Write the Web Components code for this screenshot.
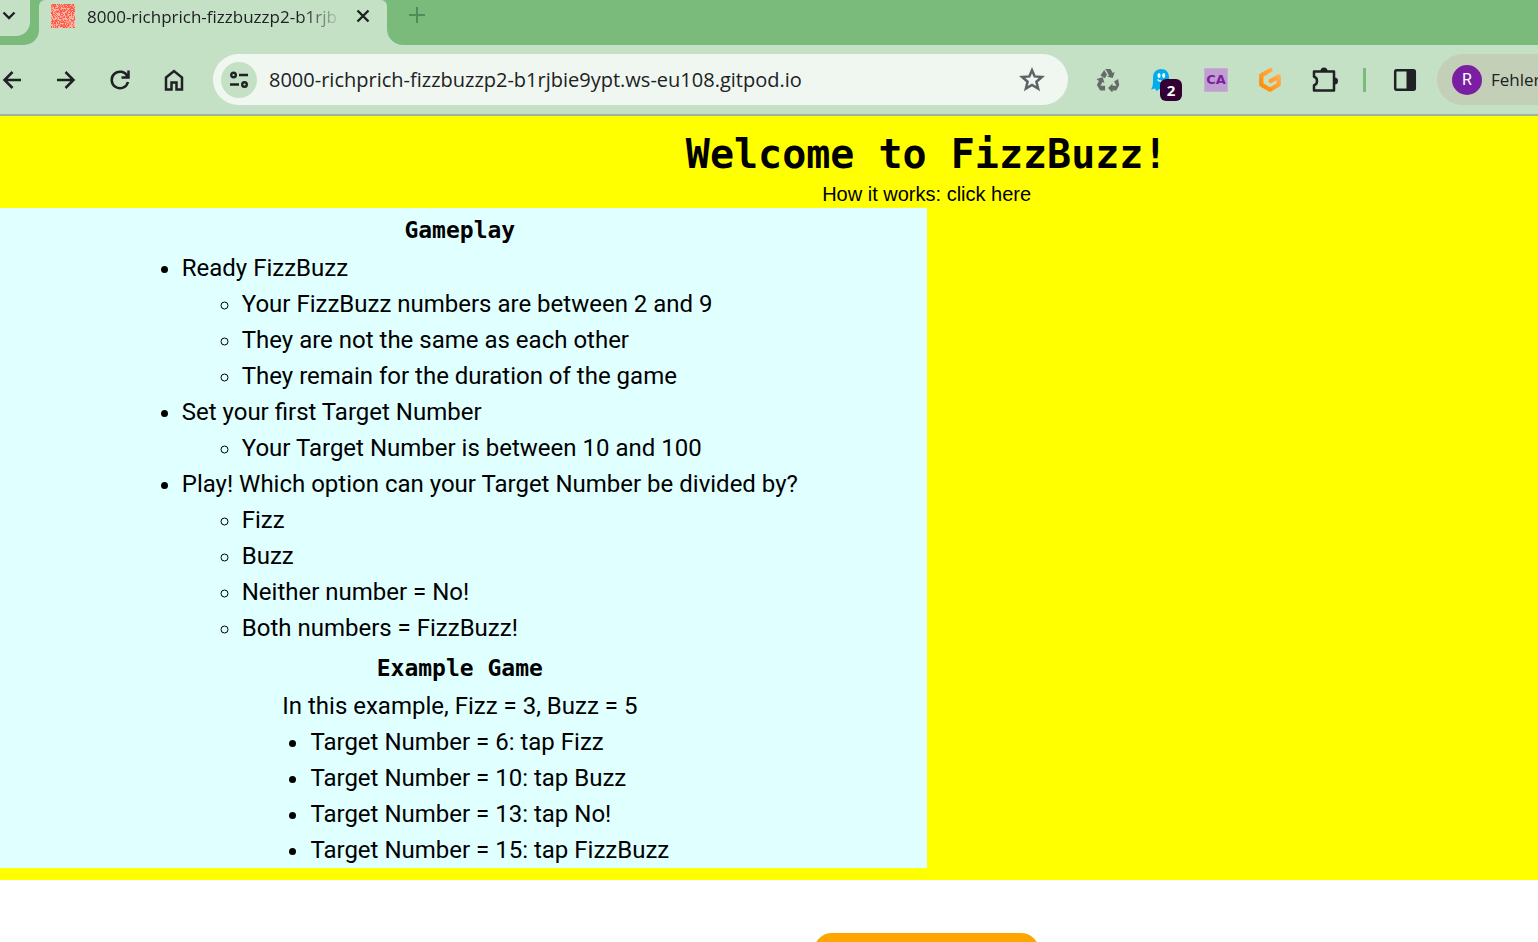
<!DOCTYPE html>
<html lang="en">
<head>
<meta charset="utf-8">
<title>FizzBuzz</title>
<style>
html,body{margin:0;height:100%;overflow:hidden;background:#fff}
body{font-family:"Open Sans","Noto Sans",sans-serif;color:#202124}
</style>
</head>
<body>
<browser-window></browser-window>

<script>
const BTN = `button{border:0;padding:0;background:none;font:inherit;color:inherit;display:grid;place-items:center}svg{display:block}`;

function define(name, css, html, setup) {
  const tpl = document.createElement('template');
  tpl.innerHTML = `<style>*{box-sizing:border-box}${css}</style>${html}`;
  customElements.define(name, class extends HTMLElement {
    constructor() {
      super();
      this.attachShadow({ mode: 'open' }).append(tpl.content.cloneNode(true));
      if (setup) setup(this.shadowRoot);
    }
  });
}

/* Speckled site icon of the tab, built from a seeded grid */
define('site-icon', `:host{display:block;width:24px;height:24px}svg{display:block}`,
`<svg width="24" height="24" viewBox="0 0 24 24" aria-hidden="true"><path fill="#ff5a48" d="M0 0h24v24H0z"/><path id="p" fill="#f9b5a5"/><path id="q" fill="#ff8573"/></svg>`,
root => {
  let seed = 11, d = '', e = '';
  for (let y = 0; y < 24; y++) for (let x = 0; x < 24; x++) {
    seed = (seed * 48271) % 2147483647;
    const v = seed / 2147483647;
    if (v < 0.36) d += `M${x} ${y}h1v1h-1z`;
    else if (v < 0.6) e += `M${x} ${y}h1v1h-1z`;
  }
  root.getElementById('p').setAttribute('d', d);
  root.getElementById('q').setAttribute('d', e);
});

define('tab-strip', `
${BTN}
:host{display:flex;height:45px;background:#c5e1c5;overflow:hidden}
.lead{width:39px;background:#7aba7b;border-bottom-right-radius:15px;flex:none}
.search{width:30px;height:36px;background:#c5e1c5;border-bottom-right-radius:14px;padding-right:12px;padding-bottom:6px}
.tabwrap{width:348px;flex:none;background:linear-gradient(#7aba7b 8px,#c5e1c5 8px)}
.tab{height:45px;background:#c5e1c5;border-radius:6px 6px 0 0;display:flex;align-items:center;padding:0 12px 14px;gap:12px}
.title{flex:1;white-space:nowrap;font-size:17px;line-height:28px;margin-top:2px;
-webkit-mask-image:linear-gradient(90deg,#000 215px,transparent 256px);mask-image:linear-gradient(90deg,#000 215px,transparent 256px)}
.close{width:24px;height:24px}
.rest{flex:1;background:#7aba7b;border-bottom-left-radius:16px;padding:3px 18px}
`, `
<div class="lead"><button class="search" aria-label="Search tabs"><svg width="16" height="16" viewBox="0 0 16 16" fill="none" stroke="#202124" stroke-width="2.4"><path d="M2.500 5.500 8 11l5.500-5.500"/></svg></button></div>
<div class="tabwrap"><div class="tab"><site-icon></site-icon><div class="title">8000-richprich-fizzbuzzp2-b1rjb</div>
<button class="close" aria-label="Close tab"><svg width="14" height="14" viewBox="0 0 14 14" stroke="#202124" stroke-width="2.400"><path d="M1.500 1.500l11 11M12.500 1.500l-11 11"/></svg></button></div></div>
<div class="rest"><button aria-label="New tab"><svg width="24" height="24" viewBox="0 0 24 24" stroke="#54895a" stroke-width="2"><path d="M4 12h16M12 4v16"/></svg></button></div>`);

define('address-bar', `
${BTN}
:host{display:flex;align-items:center;background:#f0f7f1;border-radius:26px;height:51px;padding:0 20px 0 8px;gap:12px}
.site{width:36px;height:36px;border-radius:50%;background:#c5e1c5;flex:none}
input{flex:1;min-width:0;border:0;background:none;padding:0;font:20px/28px "Open Sans","Noto Sans",sans-serif;color:#202124;outline:0}
`, `
<button class="site" aria-label="Site information"><svg width="20" height="20" viewBox="0 0 20 20" fill="none" stroke="#202124" stroke-width="2.400"><circle cx="4.500" cy="5" r="2.300"/><path d="M10 5h9M1 14.500h9"/><circle cx="15.500" cy="14.500" r="2.300"/></svg></button>
<input type="text" aria-label="Address" value="8000-richprich-fizzbuzzp2-b1rjbie9ypt.ws-eu108.gitpod.io">
<button aria-label="Bookmark"><svg width="32" height="32" viewBox="0 0 24 24"><path fill="none" stroke="#5f6368" stroke-width="1.900" d="M12 4.600l2 4.700 5.400.5-4.100 3.500 1.300 5.200-4.600-2.800-4.600 2.800 1.300-5.200-4.100-3.500 5.400-.5z"/></svg></button>`);

define('tool-bar', `
${BTN}
:host{display:flex;align-items:center;height:71px;background:#c5e1c5;border-bottom:2px solid #9fb4a1;overflow:hidden}
nav{display:flex;gap:30px;flex:none;margin-right:27px}
nav button,.ext button{width:24px;height:32px}
address-bar{flex:1;min-width:0}
.ext{display:flex;align-items:center;gap:30px;flex:none;margin:0 20px 0 28px}
.ghost{position:relative}
.badge{position:absolute;left:10px;top:15px;width:22px;height:22px;border-radius:6px;background:#330033;color:#fff;font:bold 15px/22px "Open Sans",sans-serif;text-align:center}
.ext .ca{width:24px;height:24px;background:#c09fcf;border:1px solid #c8addb;color:#7b1fa2;font:bold 13px/22px "DejaVu Sans",sans-serif}
.sep{width:3px;height:24px;background:#7aba7b;margin:0 -3px}
.profile{display:flex;align-items:center;gap:9px;height:51px;width:101px;flex:none;padding-left:15px;background:#c4cfb7;border-radius:26px 0 0 26px;font-size:17px;white-space:nowrap;overflow:hidden}
.avatar{width:30px;height:30px;border-radius:50%;background:#7b1fa2;color:#fff;font:16px/30px Roboto,sans-serif;flex:none}
`, `
<nav aria-label="Navigation">
<button aria-label="Back"><svg width="24" height="24" viewBox="0 0 24 24" fill="none" stroke="#202124" stroke-width="2.500"><path d="M21 12H4.500M12.500 4l-8 8 8 8"/></svg></button>
<button aria-label="Forward"><svg width="24" height="24" viewBox="0 0 24 24" fill="none" stroke="#202124" stroke-width="2.500"><path d="M3 12h16.500M11.500 4l8 8-8 8"/></svg></button>
<button aria-label="Reload"><svg width="24" height="24" viewBox="0 0 24 24" fill="none" stroke="#202124" stroke-width="2.500"><path d="M19.500 8.500A8.300 8.300 0 1 0 20 14M20.500 2.500v7h-7"/></svg></button>
<button aria-label="Home"><svg width="24" height="24" viewBox="0 0 24 24" fill="none" stroke="#202124" stroke-width="2.500"><path d="M4 9.500 12 3l8 6.500v12h-5.500v-7h-5v7H4z"/></svg></button>
</nav>
<address-bar></address-bar>
<div class="ext">
<button aria-label="Recycle"><svg width="24" height="24" viewBox="0 0 24 24" fill="#666b69"><path d="M9 1h5.500l2.300 3.900 1.900-1-2 6-5.700-1.300 1.900-1.100L10.600 3z"/><path d="M8.200 2 11 6.600 8.900 10.200 4.500 7.500z"/><path d="M.5 11l6.300-1.800 1.600 5.800-1.900-.9-2 3.600h4.600v4.800H4.200L.9 17l2-4z"/><path d="M23.300 17 20.300 22.500H16.500v2.200L12 20.100l4.500-4.500v2.200h4L18 13.400l4.100-2.400z"/></svg></button>
<button class="ghost" aria-label="Ghostery, 2"><svg width="24" height="24" viewBox="0 0 24 24"><path fill="#00aef0" d="M11 1c5 0 8 3.300 8 8.500V22l-3-1.500L13 23l-3.500-2L6.500 23 5 20.500 1 21.500C3 19 3 15 3 10c0-5.500 3-9 8-9z"/><ellipse cx="9" cy="7.500" rx="1.500" ry="2.500" fill="#fff"/><ellipse cx="13.700" cy="7.500" rx="1.500" ry="2.500" fill="#fff"/><path d="M7.500 11.500c2 2.300 6 2.300 8 0" fill="none" stroke="#fff" stroke-width="1.300"/></svg><span class="badge">2</span></button>
<button class="ca">CA</button>
<button aria-label="Gitpod"><svg width="24" height="26" viewBox="0 0 24 26" fill="none" stroke-width="4.300" stroke-linecap="round" stroke-linejoin="round"><defs><linearGradient id="g" x1="1" y1="0" x2="0" y2="1"><stop stop-color="#ffb45b"/><stop offset="1" stop-color="#ff8a00"/></linearGradient></defs><path stroke="url(#g)" d="M12.500 3 3.300 8.300v9.400l8.700 5 8.700-5V9.500l-7.900 4.400"/></svg></button>
<button aria-label="Extensions"><svg width="26" height="28" viewBox="0 0 26 28"><path fill="none" stroke="#202124" stroke-width="2.500" stroke-linejoin="round" d="M2 5.500h20v19H2v-5.300c4-.8 4-7.600 0-8.400z"/><path fill="#202124" d="M8.500 5a3.500 3.500 0 0 1 7 0zM22.500 11.500a3.500 3.500 0 0 1 0 7z"/></svg></button>
<span class="sep"></span>
<button aria-label="Side panel"><svg width="24" height="24" viewBox="0 0 24 24"><rect x="2.200" y="2.200" width="19.600" height="19.600" rx="1.500" fill="none" stroke="#202124" stroke-width="2.500"/><path fill="#202124" d="M13.500 2h8v20h-8z"/></svg></button>
</div>
<button class="profile"><span class="avatar">R</span><span>Fehler</span></button>`);

define('game-rules', `
:host{display:flex;flex-direction:column;align-items:center;width:50%;background:lightcyan;color:#000;padding-right:7px;font:24px/36px Roboto,sans-serif}
h2{margin:0;padding-top:2px;font:bold 23px/40px "DejaVu Sans Mono",monospace}
p,ul{margin:0}
ul{padding-left:60px}
`, `
<h2>Gameplay</h2>
<ul>
<li>Ready FizzBuzz<ul><li>Your FizzBuzz numbers are between 2 and 9</li><li>They are not the same as each other</li><li>They remain for the duration of the game</li></ul></li>
<li>Set your first Target Number<ul><li>Your Target Number is between 10 and 100</li></ul></li>
<li>Play! Which option can your Target Number be divided by?<ul><li>Fizz</li><li>Buzz</li><li>Neither number = No!</li><li>Both numbers = FizzBuzz!</li></ul></li>
</ul>
<h2>Example Game</h2>
<p>In this example, Fizz = 3, Buzz = 5</p>
<ul><li>Target Number = 6: tap Fizz</li><li>Target Number = 10: tap Buzz</li><li>Target Number = 13: tap No!</li><li>Target Number = 15: tap FizzBuzz</li></ul>`);

/* The page is wider than the window, so its right side is cut off */
define('fizz-page', `
:host{display:block;width:120.5%;color:#000}
header{background:#ff0;padding:12px 0}
h1{margin:0;text-align:center;font:bold 40px/52px "DejaVu Sans Mono",monospace}
.how{display:block;text-align:center;font:20px/28px "Liberation Sans",sans-serif;color:#000;text-decoration:none}
main{display:flex;justify-content:center;padding-top:53px}
button{border:0;background:orange;border-radius:18px;width:225px;height:56px}
`, `
<header><h1>Welcome to FizzBuzz!</h1><a class="how" href="#rules">How it works: click here</a><slot></slot></header>
<main><button aria-label="Ready"></button></main>`);

define('browser-window', `
:host{display:flex;flex-direction:column;height:100vh;overflow:hidden}
tab-strip,tool-bar{flex:none}
.view{flex:1;min-height:0;overflow:hidden;background:#fff}
`, `<tab-strip></tab-strip><tool-bar></tool-bar><div class="view"><fizz-page><game-rules id="rules"></game-rules></fizz-page></div>`);
</script>
</body>
</html>
